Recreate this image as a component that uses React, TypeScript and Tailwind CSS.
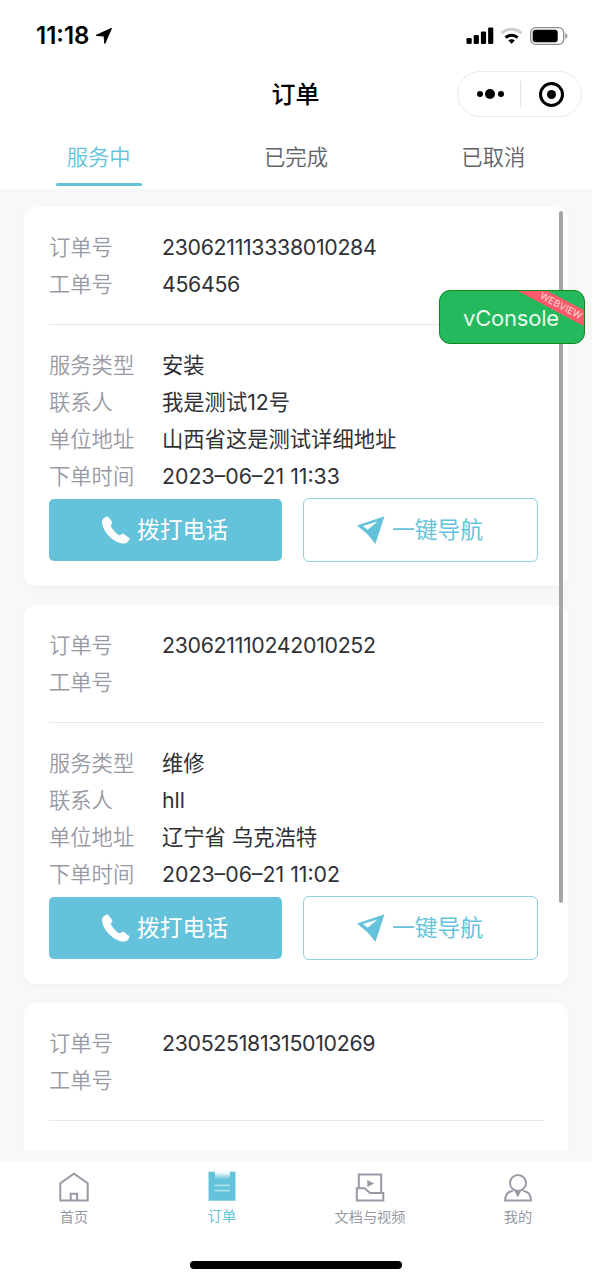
import React from 'react';

type Order = {
  orderNo: string;
  workNo: string;
  detail?: { type: string; contact: string; address: string; time: string };
};

const ORDERS: Order[] = [
  {
    orderNo: '230621113338010284',
    workNo: '456456',
    detail: {
      type: '安装',
      contact: '我是测试12号',
      address: '山西省这是测试详细地址',
      time: '2023–06–21 11:33',
    },
  },
  {
    orderNo: '230621110242010252',
    workNo: '',
    detail: {
      type: '维修',
      contact: 'hll',
      address: '辽宁省 乌克浩特',
      time: '2023–06–21 11:02',
    },
  },
  {
    orderNo: '230525181315010269',
    workNo: '',
  },
];

const TABS = ['服务中', '已完成', '已取消'];

const NAV = [
  { label: '首页', icon: HomeIcon },
  { label: '订单', icon: OrderIcon },
  { label: '文档与视频', icon: VideoIcon },
  { label: '我的', icon: UserIcon },
];

function HomeIcon() {
  return (
    <svg width="32" height="32" viewBox="0 0 32 32" fill="none" stroke="#9799a4" strokeWidth="2">
      <path d="M2.3 30.600V13.200L16 3.800l13.700 9.400v17.400z" />
      <path d="M12.700 30.500v-6.800h6.400v6.800" />
    </svg>
  );
}

function OrderIcon() {
  return (
    <svg width="32" height="32" viewBox="0 0 32 32" fill="none">
      <defs>
        <linearGradient id="clip" x1="0" y1="0" x2="0" y2="1">
          <stop offset="0.1" stopColor="#fff" />
          <stop offset="1" stopColor="#fff" stopOpacity="0" />
        </linearGradient>
      </defs>
      <path d="M2.500 1.700h27v29h-27z" fill="#64c3da" />
      <path d="M9 1.400h15v7.800H9z" fill="url(#clip)" />
      <path d="M8.500 15.400h15.400M8.500 20.600h15.400" stroke="#a9dfeb" strokeWidth="1.600" />
    </svg>
  );
}

function VideoIcon() {
  return (
    <svg width="32" height="32" viewBox="0 0 32 32" fill="none" stroke="#9799a4" strokeWidth="2">
      <path d="M4.800 17.800V4.500h22.400v18" />
      <path d="M2.800 18.300h7.700l5.600 4.600h13.200v7.700H2.800z" />
      <path d="M13.300 9.900v7l6.900-3.500z" fill="#9799a4" stroke="none" />
    </svg>
  );
}

function UserIcon() {
  return (
    <svg width="32" height="32" viewBox="0 0 32 32" fill="none" stroke="#9799a4" strokeWidth="2">
      <circle cx="16" cy="13" r="8" />
      <path d="M10.800 21C6 21.500 3.200 24.500 3.200 30.600H29c0-6.100-2.800-9.100-7.800-9.600" />
      <path d="M12.500 21h6.600l-3.300 6.500z" fill="#9799a4" stroke="none" />
    </svg>
  );
}

function PhoneIcon() {
  return (
    <svg width="28" height="28" viewBox="0 0 28 28" fill="#fff">
      <path d="M3.800 .9C1.400 2.200 0 3.600 0 5.500 0 15.500 12 27.600 22.300 27.600c2.400 0 4.200-1.700 5.100-4 .3-.8.100-1.400-.5-1.900l-4.700-3.500c-.7-.5-1.400-.5-2.100-.1l-1.700 1c-.6.300-1.200.3-1.800-.1-3.300-2.300-5.600-5.100-7.600-8.500-.3-.5-.2-1 .1-1.500l.9-1.600c.3-.6.3-1.200-.1-1.800L6.500 1.200C5.800.3 4.900.3 3.800.9z" />
    </svg>
  );
}

function PlaneIcon() {
  return (
    <svg width="28" height="28" viewBox="0 0 28 28" fill="#64c3da">
      <path fillRule="evenodd" d="M27.500.3 18.400 28 10.500 18.200 0 9.400zM20.500 5.600 5.800 10.100l4.900 3.700z" />
    </svg>
  );
}

function StatusBar() {
  return (
    <div className="flex h-[71px] items-center pl-9 pr-6">
      <span className="w-[54px] pt-px text-[24px] leading-none font-semibold whitespace-nowrap text-black">
        11:18
      </span>
      <svg className="ml-1.5" width="16" height="16" viewBox="0 0 16 16">
        <path d="M15.300.6 8.800 15.200 8.200 7.800.6 7.300z" fill="#000" stroke="#000" strokeWidth="1.200" strokeLinejoin="round" />
      </svg>
      <div className="ml-auto flex items-center">
        <svg width="28" height="18" viewBox="0 0 28 18">
          <rect x="0.500" y="11" width="5.200" height="6" rx="1.300" />
          <rect x="7.700" y="8" width="5.200" height="9" rx="1.300" />
          <rect x="14.900" y="4.500" width="5.200" height="12.500" rx="1.300" />
          <rect x="22.100" y="0.500" width="5.200" height="16.500" rx="1.300" />
        </svg>
        <svg className="ml-1.5" width="24" height="18" viewBox="0 0 24 18" fill="none" strokeWidth="3">
          <path d="M1.600 6.200a14.500 14.500 0 0 1 20 0" stroke="#cfcfcf" />
          <path d="M5.600 10.600a9 9 0 0 1 12 0" stroke="#000" />
          <path d="M11.600 16.800 8.400 13.600a4.600 4.600 0 0 1 6.400 0z" fill="#000" />
        </svg>
        <svg className="ml-1.5" width="38" height="18" viewBox="0 0 38 18" fill="none">
          <rect x="0.700" y="0.700" width="33" height="16.600" rx="4.800" stroke="#8f8f8f" strokeWidth="1.300" />
          <rect x="2.700" y="2.700" width="25" height="12.600" rx="2.800" fill="#000" />
          <path d="M35.300 6v6c1.200-.5 2.100-1.600 2.100-3s-.9-2.500-2.100-3z" fill="#8f8f8f" />
        </svg>
      </div>
    </div>
  );
}

function TitleBar() {
  return (
    <div className="grid h-[46px] grid-cols-[1fr_auto_1fr] items-center pr-2.5">
      <span />
      <h1 className="pt-0.5 pl-[9px] text-[24px] leading-none font-medium text-black">订单</h1>
      <div className="flex h-[46px] w-[125px] items-center justify-self-end rounded-full border border-[#ebebeb]">
        <div className="flex flex-1 items-center justify-center gap-[2.500px] pl-0.5">
          <span className="size-1.5 rounded-full bg-black" />
          <span className="size-2.5 rounded-full bg-black" />
          <span className="size-1.5 rounded-full bg-black" />
        </div>
        <span className="h-[26px] w-px bg-[#e2e2e2]" />
        <div className="flex flex-1 items-center justify-center">
          <span className="flex size-[25px] items-center justify-center rounded-full border-[3px] border-black">
            <span className="size-[9px] rounded-full bg-black" />
          </span>
        </div>
      </div>
    </div>
  );
}

function Row({ label, value, tight }: { label: string; value: string; tight?: boolean }) {
  return (
    <div className="flex h-[37.200px] items-center text-[21.300px] leading-none">
      <span className="w-[113px] font-[350] text-[#9799a3]">{label}</span>
      <span className={`whitespace-pre text-[#303136] ${tight ? 'tracking-[-0.300px]' : ''}`}>{value}</span>
    </div>
  );
}

function OrderCard({ order }: { order: Order }) {
  const { detail } = order;
  return (
    <article className="h-[379px] shrink-0 rounded-[12px] bg-white px-[25px] pt-[22px] shadow-[0_3px_10px_rgba(120,130,150,0.05)]">
      <Row label="订单号" value={order.orderNo} tight />
      <Row label="工单号" value={order.workNo} tight />
      <div className="mt-[20.500px] mb-[22px] h-px w-[495px] bg-[#e8e8ea]" />
      {detail && (
        <>
          <Row label="服务类型" value={detail.type} />
          <Row label="联系人" value={detail.contact} />
          <Row label="单位地址" value={detail.address} />
          <Row label="下单时间" value={detail.time} />
          <div className="mt-[2.300px] flex items-center gap-[21px] text-[22.800px] leading-none">
            <button className="flex h-[62.500px] w-[233px] items-center justify-center gap-[7px] rounded-[5px] bg-[#64c3da] pr-px text-white">
              <PhoneIcon />
              拨打电话
            </button>
            <button className="flex h-16 w-[235px] items-center justify-center gap-[7px] rounded-[6px] border border-[#8fd1e1] pr-px text-[#64c3da]">
              <PlaneIcon />
              一键导航
            </button>
          </div>
        </>
      )}
    </article>
  );
}

export default function App() {
  return (
    <div className="relative flex h-[1280px] w-[592px] flex-col overflow-hidden bg-[#f8f8f8] font-['Inter','Noto_Sans_CJK_SC',sans-serif]">
      <header className="h-[189px] shrink-0 bg-white">
        <StatusBar />
        <TitleBar />
        <nav className="grid h-[69px] grid-cols-3">
          {TABS.map((tab, i) => (
            <div key={tab} className="flex flex-col items-center">
              <span
                className={`flex h-[66px] items-center pt-4 text-[21.300px] leading-none font-[350] ${i === 0 ? 'text-[#64c3da]' : 'text-[#606266]'}`}
              >
                {tab}
              </span>
              {i === 0 && <span className="h-[3px] w-[86px] shrink-0 rounded-full bg-[#64c3da]" />}
            </div>
          ))}
        </nav>
      </header>

      <main className="mt-[18px] flex h-[943px] shrink-0 flex-col gap-[19px] overflow-hidden px-6">
        {ORDERS.map((order) => (
          <OrderCard key={order.orderNo} order={order} />
        ))}
      </main>

      <footer className="mt-3 flex flex-1 flex-col bg-white">
        <div className="grid h-[99px] grid-cols-4 pt-2">
          {NAV.map((item) => {
            const Icon = item.icon;
            const active = item.label === '订单';
            return (
              <div
                key={item.label}
                className={`flex flex-col items-center text-[14.200px] leading-[18px] ${active ? 'gap-[5px] text-[#64c3da]' : 'gap-1.5 text-[#9799a3]'}`}
              >
                <Icon />
                {item.label}
              </div>
            );
          })}
        </div>
        <div className="mx-auto h-[7.500px] w-[212px] rounded-full bg-black" />
      </footer>

      {/* scroll indicator */}
      <div className="absolute top-[211px] left-[559px] h-[692px] w-1 rounded-full bg-[#a5a5a5]" />

      {/* debug button */}
      <div className="absolute top-[290px] left-[439px] flex h-[54px] w-[146px] items-center justify-center overflow-hidden rounded-[11px] border border-[#14861f] bg-[#24b95d] pt-0.5 pr-0.5 text-[22px] tracking-[-0.200px] text-[#e9f8ee]">
        vConsole
        <span className="absolute top-2 left-[76px] w-[90px] rotate-[28deg] bg-[#fa5a69] text-center text-[9.500px] leading-[14px] tracking-[0.100px] text-[#ffd9dc]">
          WEBVIEW
        </span>
      </div>
    </div>
  );
}
